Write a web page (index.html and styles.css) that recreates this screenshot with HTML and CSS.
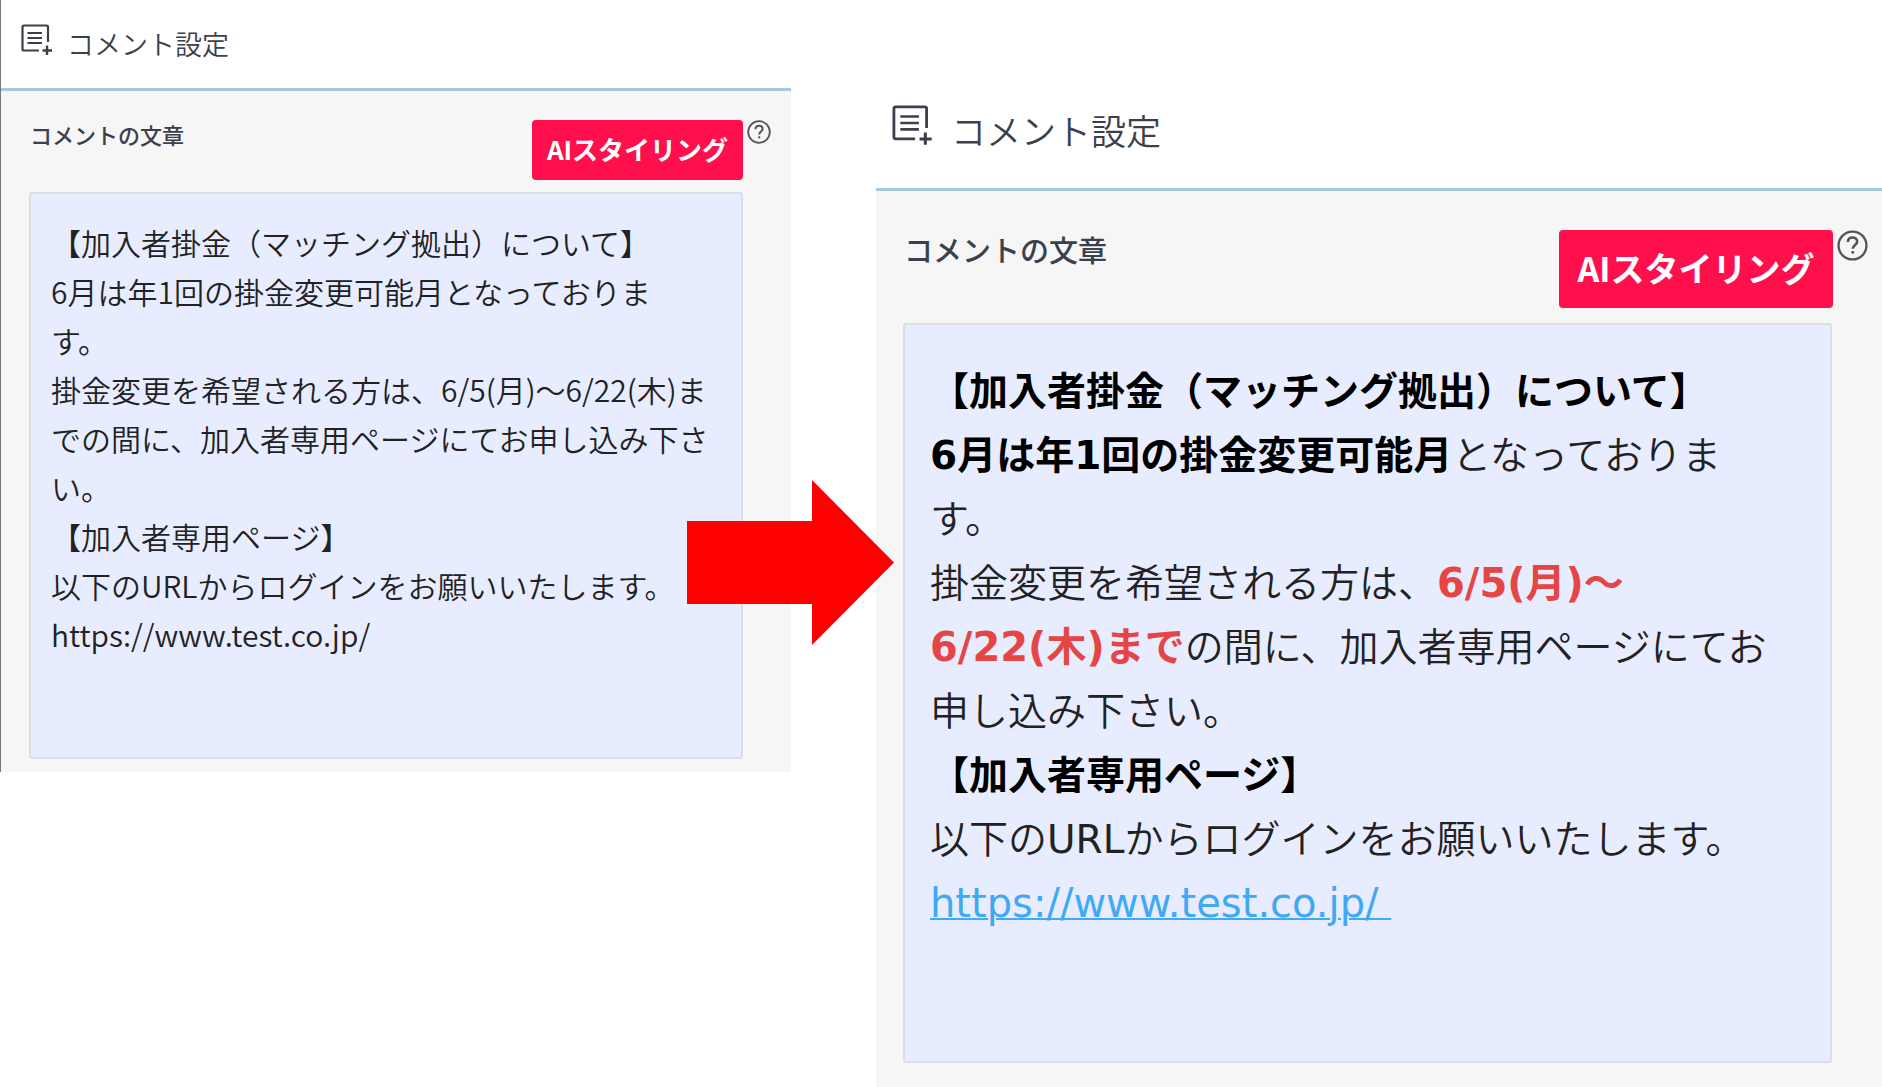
FILE: index.html
```
<!DOCTYPE html>
<html lang="ja">
<head>
  <meta charset="UTF-8">
  <title>コメント設定</title>
  <link rel="stylesheet" href="styles.css">
</head>
<body>
  <svg class="symbols" aria-hidden="true">
    <symbol id="icon-comment" viewBox="0 0 32 32">
      <path d="M27 18V3Q27 1.500 25.500 1.500H3Q1.500 1.500 1.500 3V25Q1.500 26.500 3 26.500H18" fill="none" stroke="currentColor" stroke-width="2.200"/>
      <path d="M6.500 9H21M6.500 14H21M6.500 19H21" fill="none" stroke="currentColor" stroke-width="2"/>
      <path d="M26 21.500V31M21.500 26.500H31" fill="none" stroke="currentColor" stroke-width="2.400"/>
    </symbol>
    <symbol id="icon-help" viewBox="0 0 24 24">
      <circle cx="12" cy="12" r="10.800" fill="none" stroke="currentColor" stroke-width="1.800"/>
      <path d="M8.500 9.300C8.500 7 10 5.800 12 5.800S15.600 7 15.600 9C15.600 11.500 12.200 11.700 12.200 14.500" fill="none" stroke="currentColor" stroke-width="2"/>
      <path d="M12.200 16.300V18.300" stroke="currentColor" stroke-width="2"/>
    </symbol>
  </svg>

  <main class="stage">
    <!-- 変換前 -->
    <section class="panel before">
      <header class="panel-header">
        <svg class="icon"><use href="#icon-comment"/></svg>
        <h2 class="title">コメント設定</h2>
      </header>
      <div class="panel-body">
        <div class="toolbar">
          <label class="label" for="comment">コメントの文章</label>
          <button class="ai-btn" type="button">AIスタイリング</button>
          <button class="help-btn" type="button" aria-label="ヘルプ"><svg><use href="#icon-help"/></svg></button>
        </div>
        <textarea class="editor" id="comment" spellcheck="false">【加入者掛金（マッチング拠出）について】
6月は年1回の掛金変更可能月となっておりま
す。
掛金変更を希望される方は、6/5(月)～6/22(木)ま
での間に、加入者専用ページにてお申し込み下さ
い。
【加入者専用ページ】
以下のURLからログインをお願いいたします。
https://www.test.co.jp/</textarea>
      </div>
    </section>

    <!-- 変換後 -->
    <section class="panel after">
      <header class="panel-header">
        <svg class="icon"><use href="#icon-comment"/></svg>
        <h2 class="title">コメント設定</h2>
      </header>
      <div class="panel-body">
        <div class="toolbar">
          <span class="label" id="styledLabel">コメントの文章</span>
          <button class="ai-btn" type="button">AIスタイリング</button>
          <button class="help-btn" type="button" aria-label="ヘルプ"><svg><use href="#icon-help"/></svg></button>
        </div>
        <div class="editor" contenteditable="true" role="textbox" aria-multiline="true" aria-labelledby="styledLabel" spellcheck="false"><strong>【加入者掛金（マッチング拠出）について】</strong><br><strong>6月は年1回の掛金変更可能月</strong>となっておりま<br>す。<br>掛金変更を希望される方は、<strong class="date">6/5(月)～<br>6/22(木)まで</strong>の間に、加入者専用ページにてお<br>申し込み下さい。<br><strong>【加入者専用ページ】</strong><br>以下の<span class="latin">URL</span>からログインをお願いいたします。<br><a href="https://www.test.co.jp/">https://www.test.co.jp/&nbsp;</a></div>
      </div>
    </section>

    <svg class="arrow" viewBox="0 0 207 165" aria-hidden="true">
      <path d="M0 41H125V0L207 82.500L125 165V124H0Z" fill="#ff0000"/>
    </svg>
  </main>
</body>
</html>
```
FILE: styles.css
```
* {
  box-sizing: border-box;
}
body {
  margin: 0;
  background: #fff;
  color: #3c3f4c;
  font-family: "Noto Sans CJK JP", sans-serif;
  text-spacing-trim: space-all;
}
.symbols {
  display: none;
}
.stage {
  position: relative;
  display: grid;
  grid-template-columns: 791fr 85fr 1006fr;
  align-items: start;
  min-height: 100vh;
  overflow: hidden;
}
.panel-header {
  display: flex;
  align-items: center;
  border-bottom: 3px solid #a4c9e0;
  background: #fff;
}
.title {
  margin: 0;
  font-weight: 350;
}
.panel-body {
  display: flex;
  flex-direction: column;
  background: #f6f6f6;
}
.toolbar {
  display: flex;
  align-items: flex-start;
}
.label {
  margin-right: auto;
  padding-left: 1px;
  font-weight: 500;
}
.ai-btn {
  padding: 0 0 4px;
  border: 0;
  border-radius: 4px;
  background: #ff0f4b;
  color: #fff;
  font-family: inherit;
  font-weight: 700;
  cursor: pointer;
}
.help-btn {
  display: flex;
  padding: 0;
  border: 0;
  background: none;
  color: #555;
  cursor: pointer;
}
.help-btn svg {
  width: 100%;
  height: 100%;
}
.editor {
  display: block;
  width: 100%;
  margin: 0;
  border: 2px solid #dcdfe2;
  border-radius: 3px;
  outline: none;
  background: #e7edff;
  color: #222;
  font-family: inherit;
  font-weight: 350;
  white-space: pre;
  resize: none;
  overflow: hidden;
}

/* 左：変換前 */
.before {
  grid-column: 1;
  border-left: 1px solid #777;
}
.before .panel-header {
  height: 91px;
  padding: 0 20px 8px;
  gap: 14px;
}
.before .icon {
  width: 32px;
  height: 32px;
}
.before .title {
  padding-top: 8px;
  font-size: 27px;
  line-height: 32px;
}
.before .panel-body {
  padding: 29px 48px 13px 28px;
}
.before .toolbar {
  height: 72px;
  margin-right: -28px;
}
.before .label {
  font-size: 22px;
  line-height: 28px;
}
.before .ai-btn {
  width: 211px;
  height: 60px;
  font-size: 26px;
}
.before .help-btn {
  width: 24px;
  height: 24px;
  margin-left: 4px;
}
.before .editor {
  height: 567px;
  padding: 24px 20px;
  font-size: 30px;
  line-height: 49px;
}

/* 右：変換後 */
.after {
  grid-column: 3;
  padding-top: 73px;
}
.after .panel-header {
  height: 118px;
  padding: 0 16px 10px;
  gap: 18px;
}
.after .icon {
  width: 41px;
  height: 41px;
}
.after .title {
  padding-top: 8px;
  font-size: 35px;
  line-height: 44px;
}
.after .panel-body {
  min-height: calc(100vh - 191px);
  padding: 39px 50px 24px 27px;
}
.after .toolbar {
  height: 93px;
  margin-right: -36px;
}
.after .label {
  font-size: 29px;
  line-height: 38px;
}
.after .ai-btn {
  width: 274px;
  height: 78px;
  font-size: 34px;
}
.after .help-btn {
  width: 31px;
  height: 31px;
  margin-left: 4px;
}
.after .editor {
  height: 740px;
  padding: 35px 25px;
  font-family: "DejaVu Sans", "Noto Sans CJK JP", sans-serif;
  font-size: 39px;
  line-height: 64px;
}
.editor strong,
.editor a,
.editor .latin {
  line-height: 1;
}
.editor strong {
  color: #000;
  font-weight: 700;
}
.editor .date {
  color: #e64545;
  font-size: 40px;
}
.editor .latin {
  font-weight: 400;
}
.editor a {
  color: #3fa9f5;
  font-size: 40px;
  font-weight: 400;
  text-decoration-thickness: 2px;
}

/* パネルに重なる矢印 */
.arrow {
  position: absolute;
  top: 480px;
  left: 36.5%;
  width: 11%;
}
```
